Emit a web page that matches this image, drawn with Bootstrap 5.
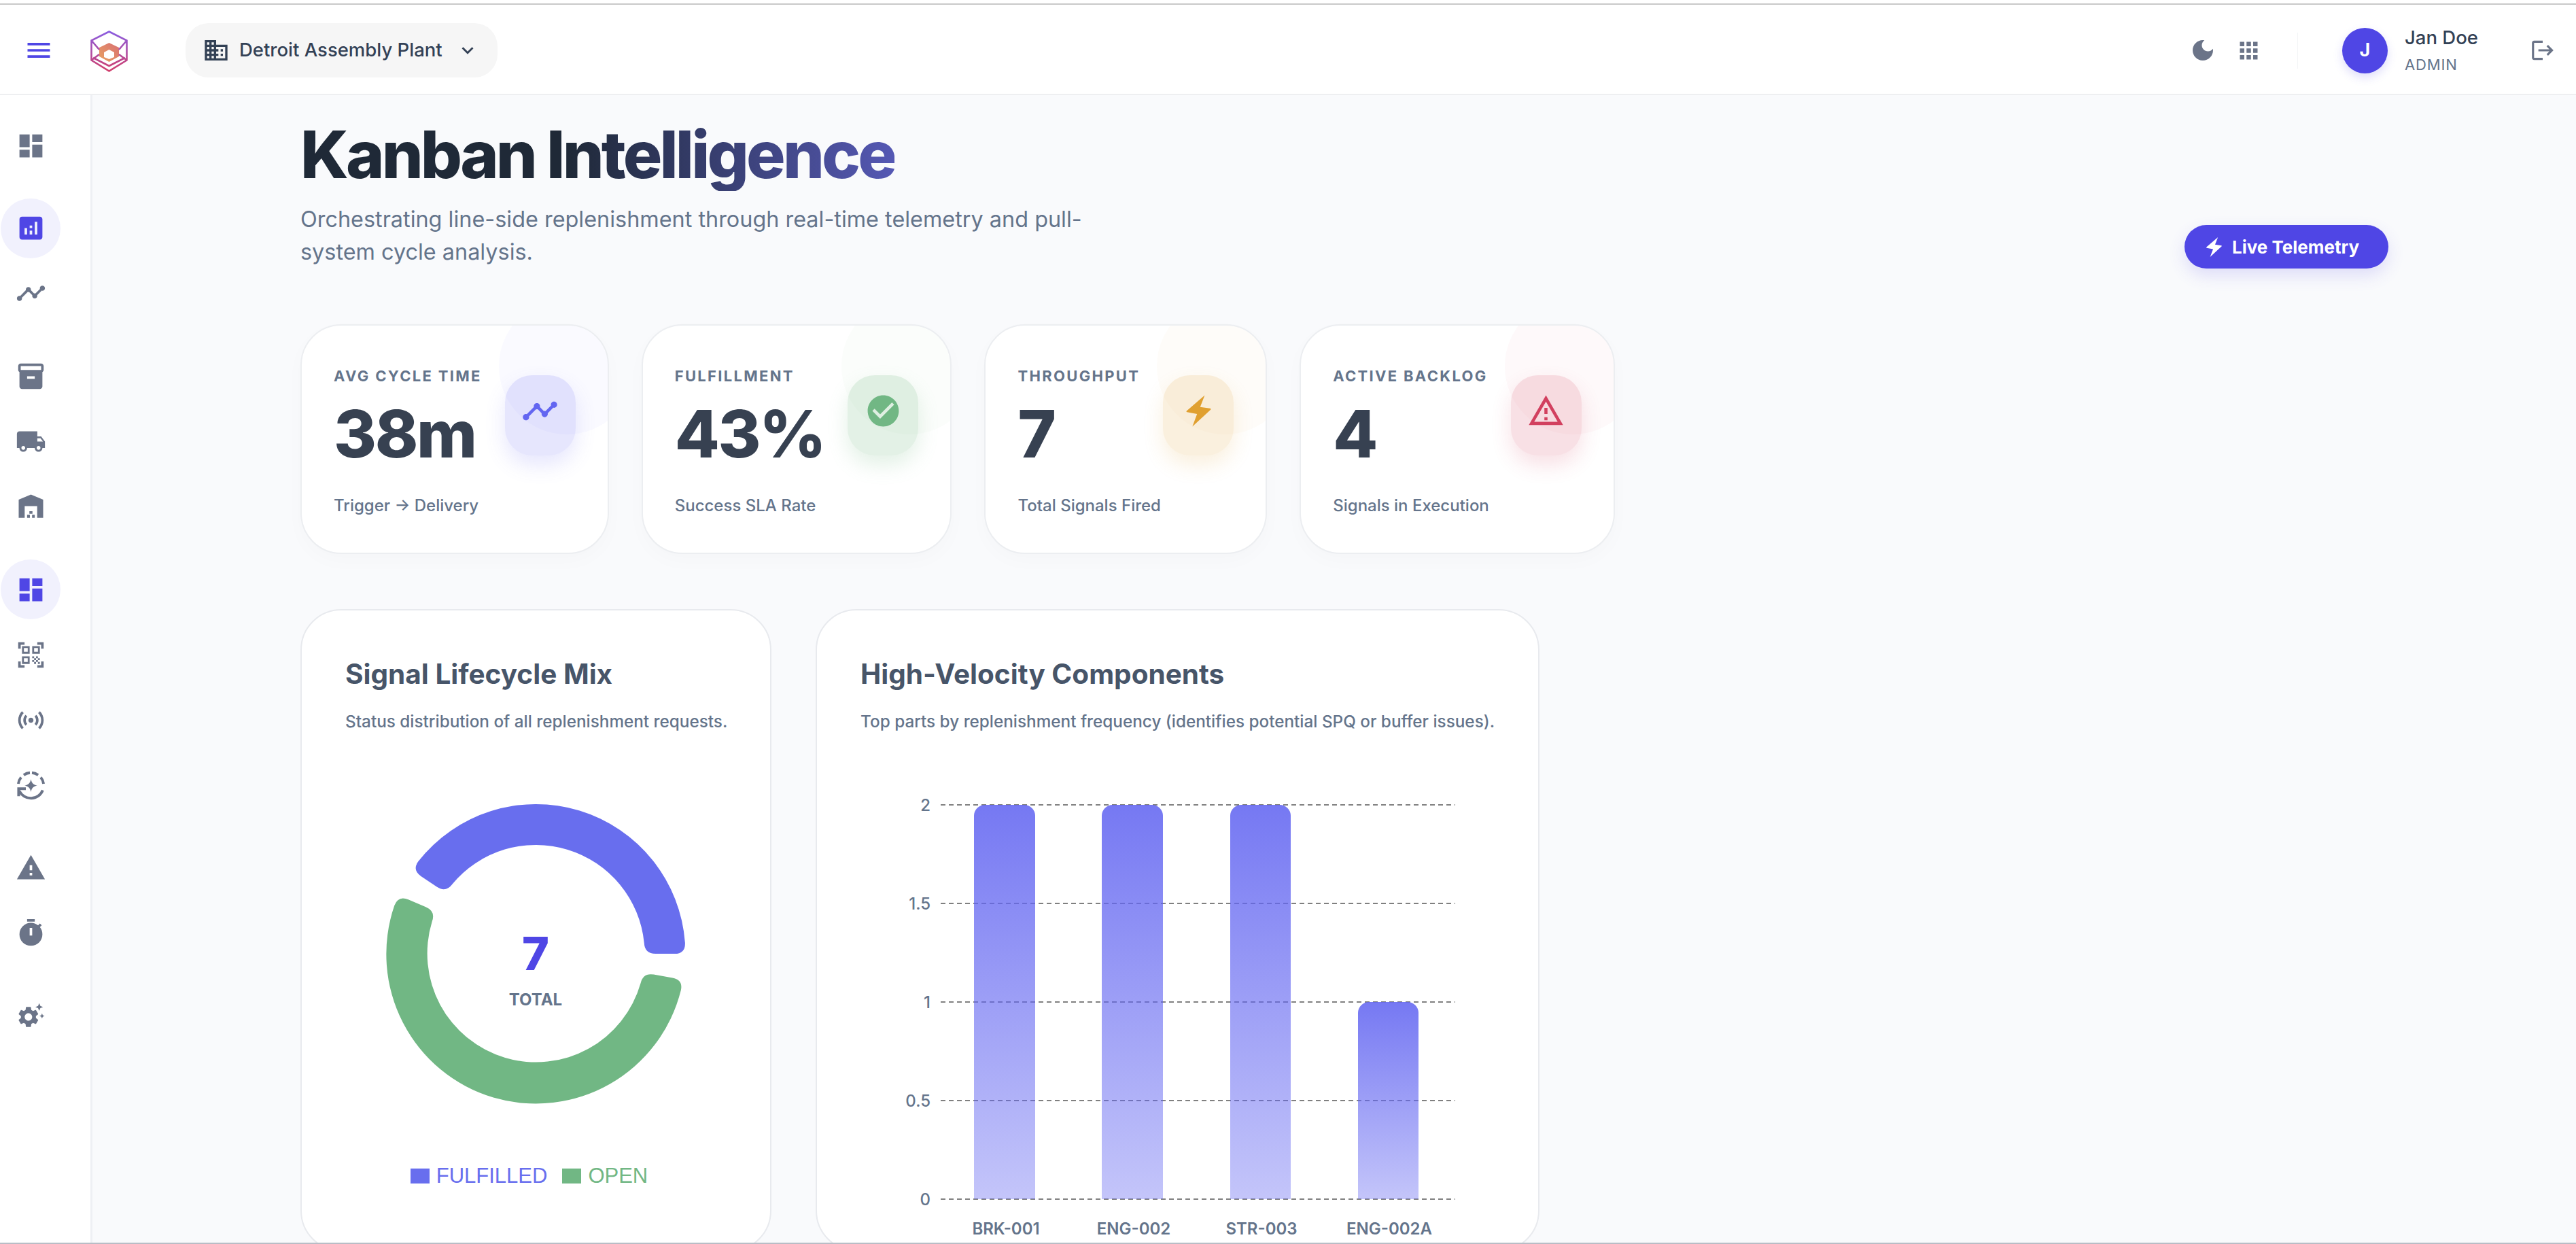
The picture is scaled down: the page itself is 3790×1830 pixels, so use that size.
<!DOCTYPE html>
<html lang="en">
<head>
  <meta charset="UTF-8" />
  <meta name="viewport" content="width=device-width, initial-scale=1.0"/>
  <title>Kanban Intelligence</title>
  <link href="https://cdn.jsdelivr.net/npm/bootstrap@5.3.0/dist/css/bootstrap.min.css" rel="stylesheet"/>
  <style>
    html, body { height: 100%; overflow: hidden; }
    body { background: #fff; font-family: Inter, "Noto Sans", sans-serif; color: #334155; }
    .app-shell { height: 100vh; padding-top: 5px; }
    .top-rule { height: 2px; background: #c9c9c9; flex: none; }
    .bottom-rule { height: 2px; background: #b9bdc6; flex: none; }
    .app-header { height: 133px; flex: none; padding-top: 3px; background: #fff; border-bottom: 2px solid #eeeff1; }
    .menu-btn { width: 36px; margin-left: 39px; color: #4f46e5; }
    .menu-btn svg { width: 44px; height: 44px; margin: 0 -4px; display: block; }
    .app-logo { width: 55px; height: 61px; margin: 3px 0 0 58px; display: block; }
    .plant-select { margin-left: 85px; height: 80px; width: 459px; padding-left: 25px; background: #f6f6f6; border-radius: 34px; color: #334155; font-size: 27.5px; font-weight: 500; }
    .plant-select .plant-ico { width: 40px; height: 40px; }
    .plant-select .plant-name { margin-left: 14px; }
    .plant-select .plant-chev { width: 34px; height: 34px; margin-left: 20px; }
    .head-tools { color: #6b7488; }
    .head-tools svg { display: block; }
    .tool-moon { width: 40px; height: 40px; }
    .tool-apps { width: 39px; height: 39px; margin-left: 28px; }
    .head-divider { width: 1px; height: 53px; background: #f3f4f6; margin: 0 65px 0 52px; }
    .user-avatar { width: 67px; height: 67px; background: #4f46e5; color: #fff; font-size: 27px; font-weight: 700; box-shadow: 0 6px 14px rgba(79,70,229,.18); }
    .user-info { margin-left: 25px; width: 184px; }
    .user-name { font-size: 27.5px; font-weight: 500; line-height: 32px; color: #334155; }
    .user-role { font-size: 22px; line-height: 28px; margin-top: 10px; color: #64748b; letter-spacing: .04em; }
    .tool-exit { width: 38px; height: 38px; margin-right: 30px; color: #6b7488; }

    .app-body { min-height: 0; }
    .side-rail { width: 136px; flex: none; padding: 30px 0 0 1px; background: #fff; border-right: 3px solid #eef0f4; }
    .rail-link { width: 88px; height: 88px; color: #6b7488; }
    .rail-link svg { width: 45px; height: 45px; }
    .rail-link.is-active { background: #f1f1fd; color: #4f46e5; }
    .rail-group { display: flex; flex-direction: column; gap: 8px; margin-bottom: 33.7px; }
    .rail-group-last { margin-top: 2px; }

    .main-pane { min-width: 0; background: #f9fafc; padding: 35px 276px 0 306px; overflow: hidden; }
    .page-title { font-size: 96px; line-height: 1.1; font-weight: 800; letter-spacing: -.04em; margin: 0 0 18px; width: fit-content;
      background: linear-gradient(90deg, #1f2937 45%, #5558b4 100%); -webkit-background-clip: text; background-clip: text; color: transparent; }
    .page-sub { font-size: 32.4px; line-height: 48px; color: #64748b; width: 1200px; margin: 0; }
    .live-pill { height: 64px; width: 300px; padding: 2px 0 0 26px; background: #4f46e5; color: #fff; font-size: 26px; font-weight: 700; border: 0; border-radius: 32px; box-shadow: 0 10px 24px rgba(79,70,229,.16); }
    .live-pill svg { width: 35px; height: 35px; margin-right: 9px; }

    .tone-indigo { --tint: #6366f1; --tile: rgba(99,102,241,.16); }
    .tone-green { --tint: #71b784; --tile: rgba(113,183,132,.2); }
    .tone-amber { --tint: #e0a030; --tile: rgba(224,160,48,.16); }
    .tone-red { --tint: #d2405f; --tile: rgba(210,64,95,.16); }
    .stat-row { gap: 48px; margin-top: 82px; }
    .stat-tile { position: relative; overflow: hidden; background: #fff; border: 2px solid #eceef1; border-radius: 60px; padding: 61px 47px 54px; box-shadow: 0 10px 30px rgba(15,23,42,.02); }
    .stat-tile::before { content: ""; position: absolute; top: -40px; right: -40px; width: 200px; height: 200px; border-radius: 50%; background: var(--tint); opacity: .03; }
    .stat-top { gap: 34px; }
    .stat-label { font-size: 22px; line-height: 1.2; font-weight: 700; letter-spacing: .105em; color: #64748b; }
    .stat-value { font-size: 96px; line-height: 1; font-weight: 800; letter-spacing: -.025em; color: #374151; margin-top: 24px; }
    .stat-note { width: 0; font-size: 24px; line-height: 1.2; font-weight: 500; color: #64748b; margin-top: 44px; white-space: nowrap; }
    .stat-icon { position: relative; width: 104px; height: 118px; margin-top: 12px; margin-bottom: -16px; padding-bottom: 12px; border-radius: 40px; background: var(--tile); box-shadow: 0 14px 30px var(--tile); flex: none; color: var(--tint); }
    .stat-icon svg { width: 55px; height: 55px; }

    .chart-row { gap: 65px; margin-top: 81px; }
    .chart-panel { background: #fff; border: 2px solid #e8eaee; border-radius: 60px; padding: 70px 64px 0; height: 945px; flex: none; }
    .panel-mix { width: 693px; }
    .panel-parts { width: 1065px; }
    .panel-title { font-size: 40.5px; line-height: 1.2; font-weight: 700; color: #475569; margin: 0 0 27px; }
    .panel-sub { font-size: 24.3px; line-height: 36px; font-weight: 500; color: #64748b; margin: 0; white-space: nowrap; }
    .chart-svg { display: block; margin-top: 44px; font-family: Inter, sans-serif; }
    .mix-total { font-size: 68px; font-weight: 800; fill: #4f46e5; }
    .mix-caption { font-size: 24px; font-weight: 700; fill: #64748b; }
    .mix-legend { gap: 22px; margin-top: 28px; padding-right: 20px; font-family: "Liberation Sans", sans-serif; font-size: 31px; line-height: 38px; }
    .legend-swatch { width: 28px; height: 22px; margin-right: 10px; background: currentColor; }
    .legend-fulfilled { color: #686eee; }
    .legend-open { color: #71b784; }
    .tick-y { font-size: 24px; font-weight: 500; fill: #64748b; text-anchor: end; }
    .tick-x { font-size: 24px; font-weight: 600; fill: #64748b; text-anchor: middle; }
    .grid-line { stroke: #808080; stroke-width: 2; stroke-dasharray: 7 5; }
  </style>
</head>
<body>
  <div class="app-shell d-flex flex-column">
    <div class="top-rule"></div>
    <header class="app-header d-flex align-items-center">
      <div class="menu-btn"><svg viewBox="0 0 24 24" fill="currentColor"><path d="M3 18h18v-2H3v2zm0-5h18v-2H3v2zm0-7v2h18V6H3z"/></svg></div>
      <svg class="app-logo" viewBox="0 0 55 61">
        <defs>
          <linearGradient id="logoEdge" x1="0" y1="0" x2="0" y2="1"><stop offset="0" stop-color="#8a5ce0"/><stop offset="1" stop-color="#d13f6c"/></linearGradient>
          <linearGradient id="logoCore" x1="1" y1="0" x2="0" y2="1"><stop offset="0" stop-color="#d96f72"/><stop offset="1" stop-color="#e8a262"/></linearGradient>
        </defs>
        <path d="M27.5 18 42 25v13l-14.5 8L13 38V25zM27.5 28 20 32v7l7.5 3 7.5-3v-7z" fill="url(#logoCore)" fill-rule="evenodd"/>
        <path d="M27.5 1.5 53.5 14.500v29L27.500 59.500 1.500 43.500v-29zM1.500 14.500 13 28M53.500 14.500 42 28M1.500 43.500 13 35M53.500 43.500 42 35M4 40l23.500 12L51 40" fill="none" stroke="url(#logoEdge)" stroke-width="2.6"/>
      </svg>
      <div class="plant-select d-flex align-items-center">
        <svg class="plant-ico" viewBox="0 0 24 24" fill="currentColor"><path d="M12 7V3H2v18h20V7H12zM6 19H4v-2h2v2zm0-4H4v-2h2v2zm0-4H4V9h2v2zm0-4H4V5h2v2zm4 12H8v-2h2v2zm0-4H8v-2h2v2zm0-4H8V9h2v2zm0-4H8V5h2v2zm10 12h-8v-2h2v-2h-2v-2h2v-2h-2V9h8v10zm-2-8h-2v2h2v-2zm0 4h-2v2h2v-2z"/></svg>
        <span class="plant-name">Detroit Assembly Plant</span>
        <svg class="plant-chev" viewBox="0 0 24 24" fill="currentColor"><path d="M16.590 8.590L12 13.170 7.410 8.590 6 10l6 6 6-6z"/></svg>
      </div>
      <div class="head-tools d-flex align-items-center ms-auto">
        <svg class="tool-moon" viewBox="0 0 24 24" fill="currentColor"><path d="M12 3c-4.970 0-9 4.030-9 9s4.030 9 9 9 9-4.030 9-9c0-.46-.04-.92-.1-1.360-.98 1.370-2.580 2.260-4.400 2.260-2.980 0-5.400-2.420-5.400-5.400 0-1.810.89-3.420 2.260-4.400-.44-.06-.9-.1-1.360-.1z"/></svg>
        <svg class="tool-apps" viewBox="0 0 24 24" fill="currentColor"><path d="M4 8h4V4H4v4zm6 12h4v-4h-4v4zm-6 0h4v-4H4v4zm0-6h4v-4H4v4zm6 0h4v-4h-4v4zm6-10v4h4V4h-4zm-6 4h4V4h-4v4zm6 6h4v-4h-4v4zm0 6h4v-4h-4v4z"/></svg>
        <div class="head-divider"></div>
        <div class="user-avatar rounded-circle d-flex align-items-center justify-content-center">J</div>
        <div class="user-info">
          <div class="user-name">Jan Doe</div>
          <div class="user-role">ADMIN</div>
        </div>
        <svg class="tool-exit" viewBox="0 0 24 24" fill="currentColor"><path d="M17 7l-1.410 1.410L18.170 11H8v2h10.170l-2.580 2.580L17 17l5-5zM4 5h8V3H4c-1.100 0-2 .9-2 2v14c0 1.100.9 2 2 2h8v-2H4V5z"/></svg>
      </div>
    </header>

    <div class="app-body d-flex flex-grow-1">
      <nav class="side-rail">
        <div class="rail-group">
          <a class="rail-link rounded-circle d-flex align-items-center justify-content-center"><svg viewBox="0 0 24 24" fill="currentColor"><path d="M3 13h8V3H3v10zm0 8h8v-6H3v6zm10 0h8V11h-8v10zm0-18v6h8V3h-8z"/></svg></a>
        </div>
        <div class="rail-group">
          <a class="rail-link is-active rounded-circle d-flex align-items-center justify-content-center"><svg viewBox="0 0 24 24" fill="currentColor"><path d="M19 3H5c-1.100 0-2 .9-2 2v14c0 1.100.9 2 2 2h14c1.100 0 2-.9 2-2V5c0-1.100-.9-2-2-2zM9 17H7v-5h2v5zm4 0h-2v-3h2v3zm0-5h-2v-2h2v2zm4 5h-2V7h2v10z"/></svg></a>
          <a class="rail-link rounded-circle d-flex align-items-center justify-content-center"><svg viewBox="0 0 24 24" fill="currentColor"><path d="M23 8c0 1.100-.9 2-2 2-.18 0-.35-.02-.51-.07l-3.560 3.550c.05.16.07.34.07.52 0 1.100-.9 2-2 2s-2-.9-2-2c0-.18.02-.36.07-.52l-2.550-2.550c-.16.05-.34.07-.52.07s-.36-.02-.52-.07l-4.550 4.560c.05.16.07.33.07.51 0 1.100-.9 2-2 2s-2-.9-2-2 .9-2 2-2c.18 0 .35.02.51.07l4.560-4.550C8.020 9.360 8 9.180 8 9c0-1.100.9-2 2-2s2 .9 2 2c0 .18-.02.36-.07.52l2.550 2.550c.16-.05.34-.07.52-.07s.36.02.52.07l3.550-3.560C19.020 8.350 19 8.180 19 8c0-1.100.9-2 2-2s2 .9 2 2z"/></svg></a>
        </div>
        <div class="rail-group">
          <a class="rail-link rounded-circle d-flex align-items-center justify-content-center"><svg viewBox="0 0 24 24" fill="currentColor"><path d="M20 2H4c-1 0-2 .9-2 2v3.010c0 .72.43 1.340 1 1.690V20c0 1.100 1.100 2 2 2h14c.9 0 2-.9 2-2V8.700c.57-.35 1-.97 1-1.690V4c0-1.100-1-2-2-2zm-5 12H9v-2h6v2zm5-7H4V4h16v3z"/></svg></a>
          <a class="rail-link rounded-circle d-flex align-items-center justify-content-center"><svg viewBox="0 0 24 24" fill="currentColor"><path d="M20 8h-3V4H3c-1.100 0-2 .9-2 2v11h2c0 1.660 1.340 3 3 3s3-1.340 3-3h6c0 1.660 1.340 3 3 3s3-1.340 3-3h2v-5l-3-4zM6 18.500c-.83 0-1.500-.67-1.500-1.500s.67-1.500 1.500-1.500 1.500.67 1.500 1.500-.67 1.500-1.500 1.500zm13.500-9l1.960 2.500H17V9.500h2.500zm-1.500 9c-.83 0-1.500-.67-1.500-1.500s.67-1.500 1.500-1.500 1.500.67 1.500 1.500-.67 1.500-1.500 1.500z"/></svg></a>
          <a class="rail-link rounded-circle d-flex align-items-center justify-content-center"><svg viewBox="0 0 24 24" fill="currentColor"><path d="M2.400 20.600V6.400L12 2.400l9.600 4v14.200h-4.700V11.400H7.100v9.200zM10.800 15.400h2.400v2.100h-2.400zM9 18.200h2.200v2.400H9zM12.900 18.200H15v2.400h-2.100z"/></svg></a>
        </div>
        <div class="rail-group">
          <a class="rail-link is-active rounded-circle d-flex align-items-center justify-content-center"><svg viewBox="0 0 24 24" fill="currentColor"><path d="M3 13h8V3H3v10zm0 8h8v-6H3v6zm10 0h8V11h-8v10zm0-18v6h8V3h-8z"/></svg></a>
          <a class="rail-link rounded-circle d-flex align-items-center justify-content-center"><svg viewBox="0 0 24 24" fill="currentColor"><path d="M9.500 6.500v3h-3v-3h3M11 5H5v6h6V5zm-1.500 9.500v3h-3v-3h3M11 13H5v6h6v-6zm6.500-6.500v3h-3v-3h3M19 5h-6v6h6V5zm-6 8h1.500v1.500H13V13zm1.500 1.500H16V16h-1.500v-1.500zM16 13h1.500v1.500H16V13zm-3 3h1.500v1.500H13V16zm1.500 1.500H16V19h-1.500v-1.500zM16 16h1.500v1.500H16V16zm1.500-1.500H19V16h-1.500v-1.500zm0 3H19V19h-1.500v-1.500zM22 7h-2V4h-3V2h5v5zm0 15v-5h-2v3h-3v2h5zM2 22h5v-2H4v-3H2v5zM2 2v5h2V4h3V2H2z"/></svg></a>
          <a class="rail-link rounded-circle d-flex align-items-center justify-content-center"><svg viewBox="0 0 24 24" fill="currentColor"><path d="M7.760 16.240C6.670 15.160 6 13.660 6 12s.67-3.160 1.760-4.240l1.420 1.420C8.450 9.900 8 10.900 8 12c0 1.100.45 2.100 1.170 2.830l-1.410 1.410zm8.480 0C17.330 15.160 18 13.660 18 12s-.67-3.160-1.760-4.240l-1.420 1.420C15.550 9.900 16 10.900 16 12c0 1.100-.45 2.100-1.170 2.830l1.410 1.410zM12 10c-1.100 0-2 .9-2 2s.9 2 2 2 2-.9 2-2-.9-2-2-2zm8 2c0 2.210-.9 4.210-2.350 5.650l1.420 1.420C20.880 17.260 22 14.760 22 12s-1.120-5.260-2.930-7.070l-1.420 1.420C19.100 7.790 20 9.790 20 12zM6.350 6.350L4.930 4.930C3.120 6.740 2 9.240 2 12s1.120 5.260 2.930 7.070l1.420-1.420C4.900 16.210 4 14.210 4 12s.9-4.210 2.350-5.650z"/></svg></a>
          <a class="rail-link rounded-circle d-flex align-items-center justify-content-center"><svg viewBox="0 0 24 24"><path d="M12 7c.6 3 2 4.400 5 5-3 .6-4.400 2-5 5-.6-3-2-4.400-5-5 3-.6 4.400-2 5-5z" fill="currentColor"/><path d="M2.090 10.680A10 10 0 0 1 4.280 5.640M6.340 3.760A10 10 0 0 1 11.200 2.030M12.800 2.030A10 10 0 0 1 17.660 3.760M19.720 5.640A10 10 0 0 1 21.910 10.680M21.280 15.700A10 10 0 0 1 3 16.400" fill="none" stroke="currentColor" stroke-width="2.1"/><path d="M1.300 13.400H8v2.200H3.500v4.800H1.300z" fill="currentColor"/></svg></a>
        </div>
        <div class="rail-group">
          <a class="rail-link rounded-circle d-flex align-items-center justify-content-center"><svg viewBox="0 0 24 24" fill="currentColor"><path d="M1 21h22L12 2 1 21zm12-3h-2v-2h2v2zm0-4h-2v-4h2v4z"/></svg></a>
          <a class="rail-link rounded-circle d-flex align-items-center justify-content-center"><svg viewBox="0 0 24 24" fill="currentColor"><path d="M9 1h6v2H9zm10.030 6.390l1.420-1.420c-.43-.51-.9-.99-1.410-1.410l-1.420 1.420C16.070 4.740 14.120 4 12 4c-4.970 0-9 4.030-9 9s4.020 9 9 9 9-4.030 9-9c0-2.120-.74-4.070-1.970-5.610zM13 14h-2V8h2v6z"/></svg></a>
        </div>
        <div class="rail-group rail-group-last">
          <a class="rail-link rounded-circle d-flex align-items-center justify-content-center"><svg viewBox="0 0 24 24" fill="currentColor"><path transform="translate(.2 3) scale(.82)" d="M19.140 12.940c.04-.3.06-.61.06-.94 0-.32-.02-.64-.07-.94l2.030-1.580c.18-.14.23-.41.12-.61l-1.920-3.320c-.12-.22-.37-.29-.59-.22l-2.390.96c-.5-.38-1.030-.7-1.620-.94l-.36-2.540c-.04-.24-.24-.41-.48-.41h-3.840c-.24 0-.43.17-.47.41l-.36 2.540c-.59.24-1.130.57-1.620.94l-2.390-.96c-.22-.08-.47 0-.59.22L2.740 8.870c-.12.21-.08.47.12.61l2.030 1.580c-.05.3-.09.63-.09.94s.02.64.07.94l-2.030 1.580c-.18.14-.23.41-.12.61l1.920 3.320c.12.22.37.29.59.22l2.390-.96c.5.38 1.030.7 1.620.94l.36 2.540c.05.24.24.41.48.41h3.840c.24 0 .44-.17.47-.41l.36-2.540c.59-.24 1.130-.56 1.620-.94l2.390.96c.22.08.47 0 .59-.22l1.920-3.320c.12-.22.07-.47-.12-.61l-2.010-1.580zM12 15.600c-1.980 0-3.600-1.620-3.600-3.600s1.620-3.600 3.600-3.600 3.600 1.620 3.600 3.600-1.620 3.600-3.600 3.600z"/><path d="M18.500 2l.9 2.100 2.100.9-2.100.9-.9 2.100-.9-2.100-2.100-.9 2.100-.9zM20.700 10l.6 1.400 1.400.6-1.400.6-.6 1.400-.6-1.400-1.400-.6 1.400-.6z"/></svg></a>
        </div>
      </nav>

      <main class="main-pane flex-grow-1">
        <div class="d-flex justify-content-between align-items-end">
          <div>
            <h1 class="page-title">Kanban Intelligence</h1>
            <p class="page-sub">Orchestrating line-side replenishment through real-time telemetry and pull-system cycle analysis.</p>
          </div>
          <button class="live-pill d-flex align-items-center" type="button">
            <svg viewBox="0 0 24 24" fill="currentColor"><path d="M15.900 2 4.300 12q-.4.600.3.800L11 14 8 22l11.700-10.800q.4-.6-.3-.8L13 9.500z"/></svg>
            Live Telemetry
          </button>
        </div>

        <div class="stat-row d-flex align-items-start">
          <div class="stat-tile tone-indigo">
            <div class="stat-top d-flex">
              <div><div class="stat-label">AVG CYCLE TIME</div><div class="stat-value">38m</div></div>
              <div class="stat-icon d-flex align-items-center justify-content-center"><svg viewBox="0 0 24 24" fill="currentColor"><path d="M23 8c0 1.100-.9 2-2 2-.18 0-.35-.02-.51-.07l-3.560 3.550c.05.16.07.34.07.52 0 1.100-.9 2-2 2s-2-.9-2-2c0-.18.02-.36.07-.52l-2.550-2.550c-.16.05-.34.07-.52.07s-.36-.02-.52-.07l-4.550 4.560c.05.16.07.33.07.51 0 1.100-.9 2-2 2s-2-.9-2-2 .9-2 2-2c.18 0 .35.02.51.07l4.560-4.550C8.020 9.360 8 9.180 8 9c0-1.100.9-2 2-2s2 .9 2 2c0 .18-.02.36-.07.52l2.550 2.550c.16-.05.34-.07.52-.07s.36.02.52.07l3.550-3.560C19.020 8.350 19 8.180 19 8c0-1.100.9-2 2-2s2 .9 2 2z"/></svg></div>
            </div>
            <div class="stat-note">Trigger → Delivery</div>
          </div>
          <div class="stat-tile tone-green">
            <div class="stat-top d-flex">
              <div><div class="stat-label">FULFILLMENT</div><div class="stat-value">43%</div></div>
              <div class="stat-icon d-flex align-items-center justify-content-center"><svg viewBox="0 0 24 24" fill="currentColor"><path d="M12 2C6.480 2 2 6.480 2 12s4.480 10 10 10 10-4.480 10-10S17.520 2 12 2zm-2 15l-5-5 1.410-1.410L10 14.170l7.590-7.590L19 8l-9 9z"/></svg></div>
            </div>
            <div class="stat-note">Success SLA Rate</div>
          </div>
          <div class="stat-tile tone-amber">
            <div class="stat-top d-flex">
              <div><div class="stat-label">THROUGHPUT</div><div class="stat-value">7</div></div>
              <div class="stat-icon d-flex align-items-center justify-content-center"><svg viewBox="0 0 24 24" fill="currentColor"><path d="M15.900 2 4.300 12q-.4.600.3.800L11 14 8 22l11.700-10.800q.4-.6-.3-.8L13 9.500z"/></svg></div>
            </div>
            <div class="stat-note">Total Signals Fired</div>
          </div>
          <div class="stat-tile tone-red">
            <div class="stat-top d-flex">
              <div><div class="stat-label">ACTIVE BACKLOG</div><div class="stat-value">4</div></div>
              <div class="stat-icon d-flex align-items-center justify-content-center"><svg viewBox="0 0 24 24" fill="currentColor"><path d="M12 5.990L19.530 19H4.470L12 5.990M12 2L1 21h22L12 2zm1 14h-2v2h2v-2zm0-6h-2v4h2v-4z"/></svg></div>
            </div>
            <div class="stat-note">Signals in Execution</div>
          </div>
        </div>

        <div class="chart-row d-flex align-items-start">
          <section class="chart-panel panel-mix">
            <h2 class="panel-title">Signal Lifecycle Mix</h2>
            <p class="panel-sub">Status distribution of all replenishment requests.</p>
            <svg class="chart-svg" width="561" height="560" viewBox="0 0 561 560">
              <path id="arcFulfilled" fill="#686eee"/>
              <path id="arcOpen" fill="#71b784"/>
              <text class="mix-total" x="280" y="304" text-anchor="middle">7</text>
              <text class="mix-caption" x="280" y="356" text-anchor="middle">TOTAL</text>
            </svg>
            <div class="mix-legend d-flex justify-content-center">
              <span class="legend-fulfilled d-flex align-items-center"><i class="legend-swatch"></i>FULFILLED</span>
              <span class="legend-open d-flex align-items-center"><i class="legend-swatch"></i>OPEN</span>
            </div>
          </section>

          <section class="chart-panel panel-parts">
            <h2 class="panel-title">High-Velocity Components</h2>
            <p class="panel-sub">Top parts by replenishment frequency (identifies potential SPQ or buffer issues).</p>
            <svg class="chart-svg" width="933" height="720" viewBox="0 0 933 720">
              <defs><linearGradient id="barFill" x1="0" y1="0" x2="0" y2="1"><stop offset="0" stop-color="#6366f1" stop-opacity=".88"/><stop offset="1" stop-color="#6366f1" stop-opacity=".38"/></linearGradient></defs>
              <line class="grid-line" x1="118" x2="875" y1="61" y2="61"/>
              <line class="grid-line" x1="118" x2="875" y1="206" y2="206"/>
              <line class="grid-line" x1="118" x2="875" y1="351" y2="351"/>
              <line class="grid-line" x1="118" x2="875" y1="496" y2="496"/>
              <line class="grid-line" x1="118" x2="875" y1="641" y2="641"/>
              <text class="tick-y" x="103" y="70">2</text>
              <text class="tick-y" x="103" y="215">1.5</text>
              <text class="tick-y" x="103" y="360">1</text>
              <text class="tick-y" x="103" y="505">0.5</text>
              <text class="tick-y" x="103" y="650">0</text>
              <path fill="url(#barFill)" d="M167 641V77a16 16 0 0 1 16-16h58a16 16 0 0 1 16 16V641z"/>
              <path fill="url(#barFill)" d="M355 641V77a16 16 0 0 1 16-16h58a16 16 0 0 1 16 16V641z"/>
              <path fill="url(#barFill)" d="M544 641V77a16 16 0 0 1 16-16h57a16 16 0 0 1 16 16V641z"/>
              <path fill="url(#barFill)" d="M732 641V367a16 16 0 0 1 16-16h57a16 16 0 0 1 16 16V641z"/>
              <text class="tick-x" x="214" y="693">BRK-001</text>
              <text class="tick-x" x="402" y="693">ENG-002</text>
              <text class="tick-x" x="590" y="693">STR-003</text>
              <text class="tick-x" x="778" y="693">ENG-002A</text>
            </svg>
          </section>
        </div>
      </main>
    </div>
    <div class="bottom-rule"></div>
  </div>

  <script>
    // donut segments with small rounded corners (recharts style), angles are clockwise from 3 o'clock
    function arcPath(from, to) {
      const cx = 280.5, cy = 280, R = 220, r = 160, c = 16;
      const pt = (rad, deg) => {
        const a = deg * Math.PI / 180;
        return (cx + rad * Math.cos(a)).toFixed(1) + ' ' + (cy + rad * Math.sin(a)).toFixed(1);
      };
      const dO = c / R * 180 / Math.PI, dI = c / r * 180 / Math.PI;
      const big = to - from > 180 ? 1 : 0;
      return 'M' + pt(R - c, from) + ' Q' + pt(R, from) + ' ' + pt(R, from + dO) +
        ' A' + R + ' ' + R + ' 0 ' + big + ' 1 ' + pt(R, to - dO) +
        ' Q' + pt(R, to) + ' ' + pt(R - c, to) +
        ' L' + pt(r + c, to) + ' Q' + pt(r, to) + ' ' + pt(r, to - dI) +
        ' A' + r + ' ' + r + ' 0 ' + big + ' 0 ' + pt(r, from + dI) +
        ' Q' + pt(r, from) + ' ' + pt(r + c, from) + 'Z';
    }
    document.getElementById('arcFulfilled').setAttribute('d', arcPath(-146, 0));
    document.getElementById('arcOpen').setAttribute('d', arcPath(10, 203));
  </script>
  <script src="https://cdn.jsdelivr.net/npm/bootstrap@5.3.0/dist/js/bootstrap.bundle.min.js"></script>
</body>
</html>
